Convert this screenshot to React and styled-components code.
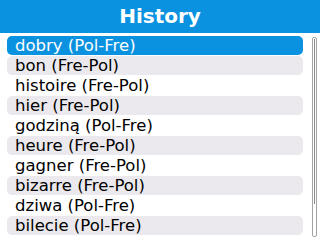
import styled, { createGlobalStyle } from 'styled-components'

const GlobalStyle = createGlobalStyle`
    html, body {
        margin: 0;
        padding: 0;
        background: #ffffff;
    }
    body {
        width: 320px;
        height: 240px;
        overflow: hidden;
        font-family: 'DejaVu Sans', Verdana, sans-serif;
    }
`

const entries = [
    'dobry (Pol-Fre)',
    'bon (Fre-Pol)',
    'histoire (Fre-Pol)',
    'hier (Fre-Pol)',
    'godziną (Pol-Fre)',
    'heure (Fre-Pol)',
    'gagner (Fre-Pol)',
    'bizarre (Fre-Pol)',
    'dziwa (Pol-Fre)',
    'bilecie (Pol-Fre)',
]

const App = () => {
    const selected = 0
    return (
        <Screen>
            <GlobalStyle />
            <Header>History</Header>
            <Body>
                <List>
                    {entries.map((text, i) => (
                        <Row key={i} $selected={i === selected} $shaded={i % 2 === 1}>
                            {text}
                        </Row>
                    ))}
                </List>
                <Track>
                    <Thumb />
                </Track>
            </Body>
        </Screen>
    )
}

export default App

const Screen = styled.div`
    width: 320px;
    height: 240px;
    display: flex;
    flex-direction: column;
    background: #ffffff;
`
const Header = styled.div`
    height: 33px;
    background: #0a92e1;
    color: #ffffff;
    font-family: 'DejaVu Sans', Verdana, sans-serif;
    font-weight: bold;
    font-size: 20px;
    line-height: 33px;
    text-align: center;
`
const Body = styled.div`
    display: flex;
    padding: 3px 3px 0 7px;
    gap: 9px;
`
const List = styled.div`
    width: 296px;
    display: flex;
    flex-direction: column;
    gap: 1px;
`
const Row = styled.div`
    height: 19px;
    padding-left: 8px;
    border-radius: 5px;
    font-size: 16.5px;
    line-height: 19px;
    white-space: nowrap;
    color: ${p => (p.$selected ? '#ffffff' : '#000000')};
    background: ${p => (p.$selected ? '#0a92e1' : p.$shaded ? '#ebe9ed' : '#ffffff')};
`
const Track = styled.div`
    margin-top: 1px;
    width: 3px;
    height: 198px;
    border: 1px solid #a3a3a3;
    border-radius: 2px;
`
const Thumb = styled.div`
    width: 1px;
    height: 165px;
    margin: 1px auto 0;
    background: #8a8a8a;
`
